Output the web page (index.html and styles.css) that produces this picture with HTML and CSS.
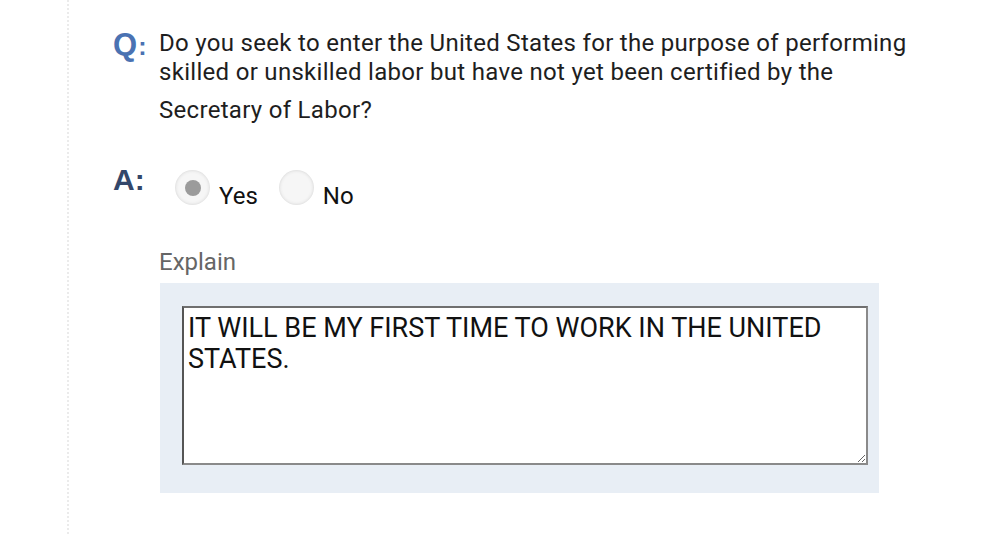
FILE: index.html
```html
<!DOCTYPE html>
<html lang="en">
<head>
<meta charset="utf-8">
<link rel="stylesheet" href="styles.css">
</head>
<body>
<div class="page">
  <div class="qa">
    <div class="row q-row">
      <div class="label q-label">Q<span class="colon">:</span></div>
      <div class="question">Do you seek to enter the United States for the purpose of performing<br>skilled or unskilled labor but have not yet been certified by the<span class="last">Secretary of Labor?</span></div>
    </div>
    <div class="row a-row">
      <div class="label a-label">A:</div>
      <div class="answer">
        <div class="radios">
          <label class="radio"><span class="dot checked"></span><span class="rtext">Yes</span></label>
          <label class="radio"><span class="dot"></span><span class="rtext">No</span></label>
        </div>
        <div class="explain-label">Explain</div>
        <div class="explain-box">
          <textarea class="explain" readonly>IT WILL BE MY FIRST TIME TO WORK IN THE UNITED STATES.</textarea>
        </div>
      </div>
    </div>
  </div>
</div>
</body>
</html>
```
FILE: styles.css
```css
html, body {
  margin: 0;
  padding: 0;
  background: #ffffff;
}
body {
  font-family: Roboto, "Noto Sans", Arial, sans-serif;
  color: #222;
  width: 1000px;
  height: 534px;
  overflow: hidden;
}
.page {
  margin-left: 67px;
  height: 534px;
  border-left: 2px dotted #ebebeb;
  padding-top: 29px;
  box-sizing: border-box;
}
.row {
  display: flex;
}
.label {
  width: 90px;
  padding-left: 44px;
  box-sizing: border-box;
  font-weight: bold;
  flex-shrink: 0;
}
.q-label {
  color: #4a72b2;
  font-size: 31px;
  line-height: 30px;
  margin-top: 1px;
  font-family: "Liberation Sans", Arial, sans-serif;
}
.q-label .colon {
  font-size: 25px;
  margin-left: 1px;
}
.question {
  font-size: 24px;
  line-height: 29px;
  letter-spacing: 0.3px;
  color: #1e1e1e;
}
.question .last {
  display: block;
  margin-top: 9px;
}
.a-row {
  margin-top: 40px;
}
.a-label {
  color: #33476a;
  font-size: 30px;
  line-height: 30px;
  font-family: "Liberation Sans", Arial, sans-serif;
}
.answer {
  width: 720px;
}
.radios {
  display: flex;
  padding-left: 17px;
  gap: 22px;
  margin-top: 6px;
}
.radio {
  display: flex;
  align-items: flex-start;
}
.dot {
  width: 33px;
  height: 33px;
  border-radius: 50%;
  background: #f6f6f6;
  box-shadow: 0 0 0 1px #e6e6e6, inset 0 0 3px #e0e0e0;
  display: flex;
  align-items: center;
  justify-content: center;
  flex-shrink: 0;
}
.dot.checked::after {
  content: "";
  width: 16px;
  height: 16px;
  border-radius: 50%;
  background: #9b9b9b;
}
.rtext {
  font-size: 24px;
  line-height: 28px;
  margin-top: 11px;
  margin-left: 10px;
  color: #111;
}
.explain-label {
  margin-top: 38px;
  font-size: 24px;
  color: #666;
  line-height: 29px;
}
.explain-box {
  margin-top: 6px;
  margin-left: 1px;
  background: #e8eef5;
  width: 719px;
  height: 210px;
  padding: 23px 11px 0 22px;
  box-sizing: border-box;
}
.explain {
  display: block;
  width: 686px;
  height: 159px;
  box-sizing: border-box;
  border: 2px solid #8a8a8a;
  border-top-color: #6f6f6f;
  border-left-color: #555;
  background: #fff;
  font-family: Roboto, "Noto Sans", Arial, sans-serif;
  font-size: 27px;
  line-height: 31px;
  color: #111;
  padding: 5px 4px;
  margin: 0;
  resize: vertical;
  overflow: hidden;
}
```
